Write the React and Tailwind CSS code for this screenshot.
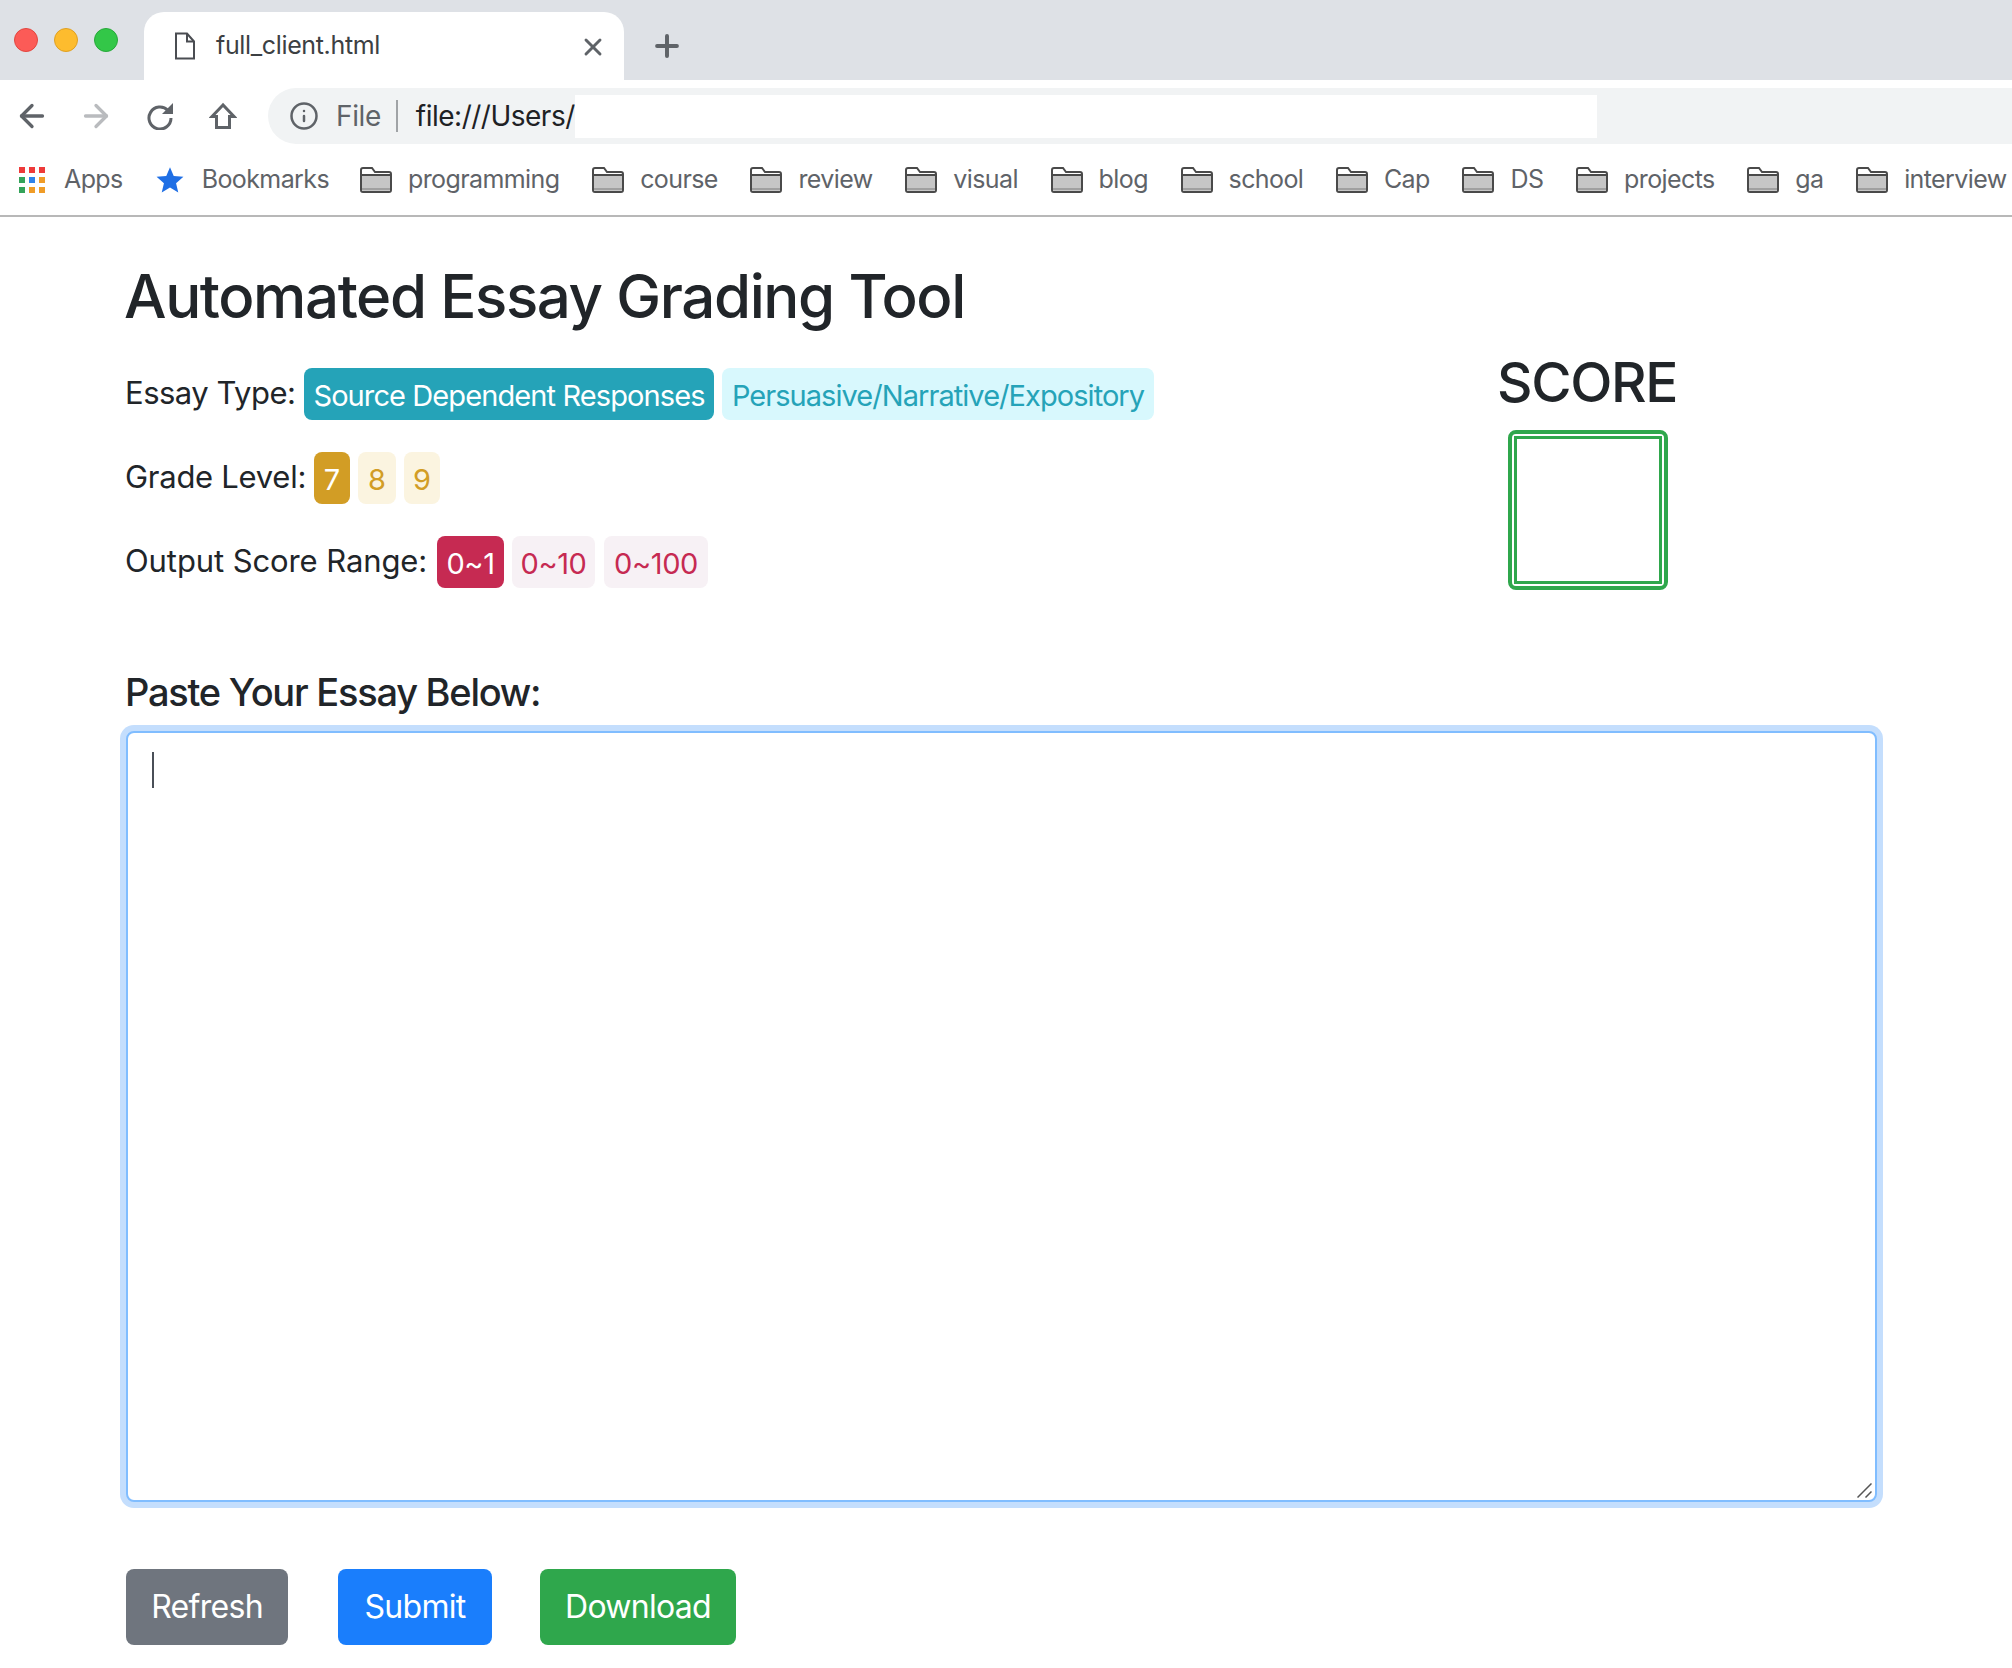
import { ArrowLeft, ArrowRight, Info, Plus, X } from 'lucide-react';

const bookmarks = ['programming', 'course', 'review', 'visual', 'blog', 'school', 'Cap', 'DS', 'projects', 'ga', 'interview'];

function FileIcon() {
  return (
    <svg className="shrink-0" width="22" height="28" viewBox="0 0 22 28" fill="none" stroke="#4a4d52" strokeWidth="2">
      <path d="M2 1.5h11l7 8v17H2z" />
      <path d="M13 1.5v8h7" />
    </svg>
  );
}

function ReloadIcon() {
  return (
    <svg className="shrink-0" width="28" height="28" viewBox="0 0 28 28" fill="none">
      <path d="M22 8.5A11 11 0 1 0 25 16" stroke="#5f6368" strokeWidth="3" />
      <path d="M27 1v11H16z" fill="#5f6368" />
    </svg>
  );
}

function HomeIcon() {
  return (
    <svg className="shrink-0" width="28" height="28" viewBox="0 0 28 28" fill="none" stroke="#5f6368" strokeWidth="3">
      <path d="M14 3 3 14.5h4.500V25.500h13V14.500H25z" />
    </svg>
  );
}

function FolderIcon() {
  return (
    <svg className="shrink-0" width="32" height="26" viewBox="0 0 32 26">
      <path d="M1 3a2 2 0 0 1 2-2h9l3 4h14a2 2 0 0 1 2 2v16a2 2 0 0 1-2 2H3a2 2 0 0 1-2-2z" fill="#fff" stroke="#4a4a4a" strokeWidth="2" />
      <rect x="2" y="8" width="28" height="16" fill="#c6c6c6" />
      <rect x="2" y="7" width="28" height="2" fill="#4a4a4a" />
      <rect x="2" y="21" width="28" height="2" fill="#a0a0a0" />
    </svg>
  );
}

function AppsIcon() {
  const cells = [
    ['#ee3a39', '#ee3a39', '#ee3a39'],
    ['#34a35a', '#2d83ec', '#f09c27'],
    ['#34a35a', '#f09c27', '#f09c27'],
  ];
  return (
    <svg className="shrink-0" width="26" height="26" viewBox="0 0 26 26">
      {cells.map((row, y) =>
        row.map((fill, x) => <rect key={`${x}-${y}`} x={x * 10} y={y * 10} width="6" height="6" fill={fill} />)
      )}
    </svg>
  );
}

function Chip({ className, children }) {
  return (
    <span className={`flex h-[52px] items-center justify-center whitespace-nowrap rounded-lg pt-1 text-[29px] ${className}`}>
      {children}
    </span>
  );
}

function Row({ label, labelClass, className, children }) {
  return (
    <div className={`flex h-[52px] items-center gap-2 ${className}`}>
      <span className={`-ml-px mb-0.5 whitespace-nowrap text-[31px] text-[#212529] ${labelClass}`}>{label}</span>
      {children}
    </div>
  );
}

export default function App() {
  return (
    <div className="min-h-[1668px] bg-white font-['Inter',sans-serif] text-[#212529]">
      {/* Tab strip */}
      <div className="flex h-20 items-end bg-[#dee1e6]">
        <div className="flex w-36 items-center gap-4 self-center pl-3.5">
          <span className="h-6 w-6 rounded-full border border-[#e2463f] bg-[#fc5b57]" />
          <span className="h-6 w-6 rounded-full border border-[#dfa023] bg-[#fdbc2e]" />
          <span className="h-6 w-6 rounded-full border border-[#27a83a] bg-[#33c748]" />
        </div>
        <div className="flex h-[68px] w-[480px] items-center rounded-t-[20px] bg-white pl-[30px] pr-[17px]">
          <FileIcon />
          <span className="ml-[20px] flex-1 text-[25px] tracking-[-0.35px] text-[#3c4043]">full_client.html</span>
          <X className="mt-0.5" size={28} strokeWidth={2.5} color="#5f6368" />
        </div>
        <Plus className="mb-[17px] ml-[26px]" size={34} strokeWidth={2.8} color="#5f6368" />
      </div>

      {/* Toolbar */}
      <div className="flex h-[67px] items-start pt-2">
        <div className="flex h-14 w-[268px] items-center pl-[14px]">
          <ArrowLeft size={36} strokeWidth={2.2} color="#5f6368" />
          <ArrowRight className="ml-[28px]" size={36} strokeWidth={2.2} color="#b9bbbe" />
          <span className="ml-[32px]"><ReloadIcon /></span>
          <span className="ml-[35px]"><HomeIcon /></span>
        </div>
        <div className="flex h-14 flex-1 items-center rounded-l-[28px] bg-[#f1f3f4] pl-[21px]">
          <Info size={30} strokeWidth={2} color="#5f6368" />
          <span className="ml-[17px] text-[28px] tracking-[-0.4px] text-[#5f6368]">File</span>
          <span className="ml-[15px] h-8 w-0.5 bg-[#a0a3a6]" />
          <span className="ml-[18px] w-[159px] whitespace-nowrap text-[28px] tracking-[-0.5px] text-[#202124]">
            file:///Users/
          </span>
          <span className="h-[43px] w-[1022px] bg-white" />
        </div>
      </div>

      {/* Bookmarks bar */}
      <div className="flex h-[70px] items-center overflow-hidden border-b-2 border-[#b8b8b8] pb-0.5 pl-[19px] text-[25px] tracking-[-0.6px] text-[#5f6368]">
        <AppsIcon />
        <span className="ml-[19px]">Apps</span>
        <svg className="ml-[33px] shrink-0" width="28" height="28" viewBox="0 0 24 24" fill="#1f6fe5">
          <path d="m12 1 3.200 7.600 8.300.7-6.300 5.400 1.900 8.100L12 18.500l-7.100 4.300 1.900-8.100L.5 9.300l8.300-.7z" />
        </svg>
        <span className="ml-[18px] mr-[31px] whitespace-nowrap">Bookmarks</span>
        <div className="flex items-center gap-[32.7px]">
          {bookmarks.map((name) => (
            <div key={name} className="flex items-center gap-4">
              <FolderIcon />
              <span>{name}</span>
            </div>
          ))}
        </div>
      </div>

      {/* Page */}
      <div className="pl-[126px] pr-[135px]">
        <div className="flex">
          <div className="flex-1">
            <h1 className="-ml-0.5 pt-[39px] text-[60px] font-medium leading-[80px] tracking-[-1.4px]">Automated Essay Grading Tool</h1>
            <Row label="Essay Type:" labelClass="w-[171px] tracking-[-0.5px]" className="mt-[32px]">
              <Chip className="w-[410px] bg-[#25a3b8] tracking-[-0.9px] text-white">Source Dependent Responses</Chip>
              <Chip className="w-[432px] bg-[#d8f8fd] tracking-[-0.95px] text-[#25a3b8]">Persuasive/Narrative/Expository</Chip>
            </Row>
            <Row label="Grade Level:" labelClass="w-[181px] tracking-[-0.27px]" className="mt-8">
              <Chip className="w-9 bg-[#d29d25] text-white">7</Chip>
              <Chip className="w-[38px] bg-[#fbf4e0] text-[#d29d25]">8</Chip>
              <Chip className="w-9 bg-[#fbf4e0] text-[#d29d25]">9</Chip>
            </Row>
            <Row label="Output Score Range:" labelClass="w-[304px] tracking-[-0.1px]" className="mt-8">
              <Chip className="w-[67px] bg-[#c62a52] tracking-[-0.4px] text-white">0~1</Chip>
              <Chip className="w-[83px] bg-[#f7f1f5] tracking-[-0.4px] text-[#c62a52]">0~10</Chip>
              <Chip className="ml-px w-[104px] bg-[#f7f1f5] tracking-[-0.4px] text-[#c62a52]">0~100</Chip>
            </Row>
          </div>
          <div className="flex w-[580px] flex-col items-center pt-[132px]">
            <h2 className="text-[55px] font-medium leading-[66px] tracking-[-1.4px]">SCORE</h2>
            <div className="ml-0.5 mt-[15px] h-[160px] w-[160px] rounded-lg border-4 border-[#2fa74c] p-0.5">
              <div className="h-full w-full border-[3px] border-[#2fa74c]" />
            </div>
          </div>
        </div>

        <h3 className="-ml-px mt-[79px] text-[38px] font-medium leading-[46px] tracking-[-1.25px]">Paste Your Essay Below:</h3>
        <div className="relative mt-[16px]">
          <textarea
            className="block h-[771px] w-full resize-none rounded-lg border-2 border-[#80bdff] bg-white shadow-[0_0_0_6px_#c4defd] outline-none"
            aria-label="Essay"
          />
          <span className="absolute left-[26px] top-[21px] h-9 w-0.5 bg-[#4a4f57]" />
          <svg className="absolute bottom-1 right-[5px]" width="15" height="15" viewBox="0 0 15 15" stroke="#555" strokeWidth="1.5">
            <path d="M0.500 14.500 14.500 0.500M8.500 14.500l6-6" />
          </svg>
        </div>

        <div className="mt-[67px] flex gap-[50px] text-[32px] tracking-[-0.7px] text-white">
          <button className="h-[76px] w-[162px] rounded-lg bg-[#6f757e]">Refresh</button>
          <button className="h-[76px] w-[154px] rounded-lg bg-[#1a7efc]">Submit</button>
          <button className="-ml-0.5 h-[76px] w-[196px] rounded-lg bg-[#2fa74c]">Download</button>
        </div>
      </div>
    </div>
  );
}
